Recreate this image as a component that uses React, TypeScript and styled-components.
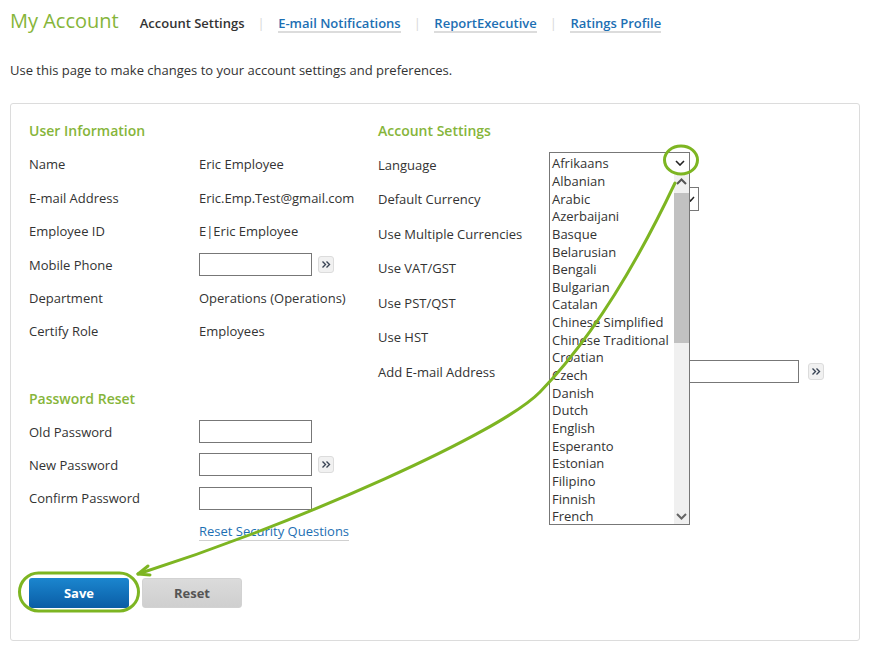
import React from "react";
import styled, { createGlobalStyle } from "styled-components";

const Global = createGlobalStyle`
  html, body { margin: 0; padding: 0; background: #fff; }
  body {
    font-family: "Open Sans", "Liberation Sans", Arial, sans-serif;
    color: #333;
    font-size: 13px;
  }
  * { box-sizing: border-box; }
`;

const Page = styled.div`
  position: relative;
  width: 871px;
  height: 650px;
  padding: 0 10px;
  overflow: hidden;
`;

const Header = styled.div`
  display: flex;
  align-items: baseline;
  padding-top: 9px;
  height: 33px;
`;

const Title = styled.h1`
  margin: 0 21px 0 0;
  font-size: 20px;
  font-weight: 400;
  line-height: 24px;
  color: #86b53a;
`;

const NavItem = styled.a<{ $active?: boolean }>`
  font-size: 13px;
  font-weight: 600;
  line-height: 16px;
  text-decoration: none;
  color: ${(p) => (p.$active ? "#333" : "#1d6fb3")};
  border-bottom: 2px solid ${(p) => (p.$active ? "transparent" : "#dcdcdc")};
`;

const NavSep = styled.span`
  font-size: 13px;
  color: #d8d8d8;
  margin: 0 13.5px 0 13px;
`;

const Intro = styled.p`
  margin: 28px 0 0;
  font-size: 13px;
  line-height: 18px;
`;

const Panel = styled.div`
  margin-top: 24px;
  width: 850px;
  border: 1px solid #dcdcdc;
  border-radius: 3px;
  padding: 10.3px 18px 32px;
`;

const Columns = styled.div`
  display: flex;
`;

const Column = styled.div<{ $width?: number }>`
  display: flex;
  flex-direction: column;
  ${(p) => (p.$width ? `width: ${p.$width}px;` : "flex: 1;")}
`;

const SectionTitle = styled.div`
  height: 33.4px;
  display: flex;
  align-items: center;
  font-size: 14px;
  font-weight: 600;
  color: #86b53a;
`;

const Row = styled.div<{ $h: number }>`
  height: ${(p) => p.$h}px;
  display: flex;
  align-items: center;
`;

const Label = styled.div<{ $w: number }>`
  width: ${(p) => p.$w}px;
  flex-shrink: 0;
  line-height: 18px;
`;

const Value = styled.div`
  line-height: 18px;
`;

const TextInput = styled.input<{ $w: number }>`
  width: ${(p) => p.$w}px;
  height: 23px;
  border: 1px solid #777;
  border-radius: 0;
  padding: 0 3px;
  font: inherit;
`;

const GoButton = styled.button<{ $gap?: number }>`
  width: 16px;
  height: 17px;
  margin-left: ${(p) => p.$gap ?? 6}px;
  padding: 0;
  border: 1px solid #dcdcdc;
  border-radius: 3px;
  background: #f1f1f1;
  display: flex;
  align-items: center;
  justify-content: center;
`;

const Link = styled.a`
  color: #1d6fb3;
  text-decoration: none;
  line-height: 17px;
  border-bottom: 1px solid #d0d0d0;
`;

const SelectWrap = styled.div`
  position: relative;
  width: 141px;
  align-self: flex-start;
  margin-top: 4.3px;
  z-index: 5;
`;

const SelectHead = styled.div`
  height: 21px;
  border: 1px solid #777;
  border-bottom: none;
  background: #fff;
  padding: 1px 0 0 2px;
  display: flex;
  align-items: center;
  justify-content: space-between;
  line-height: 18px;
`;

const Chevron = styled.svg`
  margin-right: 4px;
`;

const ListBox = styled.div`
  position: absolute;
  top: 100%;
  left: 0;
  width: 141px;
  height: 352.5px;
  border: 1px solid #777;
  border-top: none;
  background: #fff;
  overflow: hidden;
`;

const Option = styled.div`
  height: 17.65px;
  line-height: 17.65px;
  padding-left: 2px;
  white-space: nowrap;
`;

const ScrollTrack = styled.div`
  position: absolute;
  top: 0;
  right: 0;
  bottom: 0;
  width: 15px;
  background: #f0f0f0;
`;

const ScrollThumb = styled.div`
  position: absolute;
  top: 20px;
  left: 0;
  width: 15px;
  height: 150px;
  background: #c1c1c1;
`;

const ScrollArrow = styled.svg<{ $bottom?: boolean }>`
  position: absolute;
  left: 2px;
  ${(p) => (p.$bottom ? "bottom: 4px;" : "top: 5px;")}
`;

const Select = styled.div<{ $w: number }>`
  width: ${(p) => p.$w}px;
  height: 24px;
  border: 1px solid #777;
  display: flex;
  align-items: center;
  justify-content: flex-end;
  padding-right: 3px;
`;

const Buttons = styled.div`
  display: flex;
  gap: 13px;
  margin-top: 29.5px;
`;

const Button = styled.button<{ $primary?: boolean }>`
  width: 100px;
  height: 30px;
  border-radius: 3px;
  font-family: inherit;
  font-size: 13px;
  font-weight: 700;
  border: ${(p) => (p.$primary ? "none" : "1px solid #d2d2d2")};
  color: ${(p) => (p.$primary ? "#fff" : "#555")};
  background: ${(p) =>
    p.$primary
      ? "linear-gradient(#1b86cf, #0a5da5)"
      : "linear-gradient(#dbdbdb, #cfcfcf)"};
`;

const Overlay = styled.svg`
  position: absolute;
  left: 0;
  top: 0;
  pointer-events: none;
  z-index: 10;
`;

const Dbl = () => (
  <svg width="10" height="9" viewBox="0 0 10 9">
    <path d="M1.5 1.5 L4.5 4.5 L1.5 7.5 M5.5 1.5 L8.5 4.5 L5.5 7.5" fill="none" stroke="#3a4455" strokeWidth="1.4" />
  </svg>
);

const languages = [
  "Albanian", "Arabic", "Azerbaijani", "Basque", "Belarusian", "Bengali", "Bulgarian", "Catalan",
  "Chinese Simplified", "Chinese Traditional", "Croatian", "Czech", "Danish", "Dutch", "English",
  "Esperanto", "Estonian", "Filipino", "Finnish", "French",
];

const LH = 33.4;
const RH = 34.5;

export default function App() {
  return (
    <Page>
      <Global />
      <Header>
        <Title>My Account</Title>
        <NavItem $active>Account Settings</NavItem>
        <NavSep>|</NavSep>
        <NavItem href="#">E-mail Notifications</NavItem>
        <NavSep>|</NavSep>
        <NavItem href="#">ReportExecutive</NavItem>
        <NavSep>|</NavSep>
        <NavItem href="#">Ratings Profile</NavItem>
      </Header>
      <Intro>Use this page to make changes to your account settings and preferences.</Intro>
      <Panel>
        <Columns>
          <Column $width={349}>
            <SectionTitle>User Information</SectionTitle>
            <Row $h={LH}><Label $w={170}>Name</Label><Value>Eric Employee</Value></Row>
            <Row $h={LH}><Label $w={170}>E-mail Address</Label><Value>Eric.Emp.Test@gmail.com</Value></Row>
            <Row $h={LH}><Label $w={170}>Employee ID</Label><Value>E|Eric Employee</Value></Row>
            <Row $h={LH}>
              <Label $w={170}>Mobile Phone</Label>
              <TextInput $w={113} />
              <GoButton><Dbl /></GoButton>
            </Row>
            <Row $h={LH}><Label $w={170}>Department</Label><Value>Operations (Operations)</Value></Row>
            <Row $h={LH}><Label $w={170}>Certify Role</Label><Value>Employees</Value></Row>
            <Row $h={LH} />
            <SectionTitle>Password Reset</SectionTitle>
            <Row $h={LH}><Label $w={170}>Old Password</Label><TextInput $w={113} type="password" /></Row>
            <Row $h={LH}>
              <Label $w={170}>New Password</Label>
              <TextInput $w={113} type="password" />
              <GoButton><Dbl /></GoButton>
            </Row>
            <Row $h={LH}><Label $w={170}>Confirm Password</Label><TextInput $w={113} type="password" /></Row>
            <Row $h={LH}><Label $w={170} /><Link href="#">Reset Security Questions</Link></Row>
          </Column>
          <Column>
            <SectionTitle>Account Settings</SectionTitle>
            <Row $h={RH}>
              <Label $w={171}>Language</Label>
              <SelectWrap>
                <SelectHead>
                  Afrikaans
                  <Chevron width="10" height="6" viewBox="0 0 10 6">
                    <path d="M1 1 L5 5 L9 1" fill="none" stroke="#222" strokeWidth="1.6" />
                  </Chevron>
                </SelectHead>
                <ListBox>
                  {languages.map((l) => (
                    <Option key={l}>{l}</Option>
                  ))}
                  <ScrollTrack>
                    <ScrollArrow width="11" height="7" viewBox="0 0 11 7">
                      <path d="M1 6 L5.5 1.5 L10 6" fill="none" stroke="#555" strokeWidth="2" />
                    </ScrollArrow>
                    <ScrollThumb />
                    <ScrollArrow $bottom width="11" height="7" viewBox="0 0 11 7">
                      <path d="M1 1 L5.5 5.5 L10 1" fill="none" stroke="#666" strokeWidth="2" />
                    </ScrollArrow>
                  </ScrollTrack>
                </ListBox>
              </SelectWrap>
            </Row>
            <Row $h={RH}>
              <Label $w={171}>Default Currency</Label>
              <Select $w={150}>
                <svg width="9" height="6" viewBox="0 0 9 6">
                  <path d="M1 1 L4.5 5 L8 1" fill="none" stroke="#222" strokeWidth="1.5" />
                </svg>
              </Select>
            </Row>
            <Row $h={RH}><Label $w={171}>Use Multiple Currencies</Label></Row>
            <Row $h={RH}><Label $w={171}>Use VAT/GST</Label></Row>
            <Row $h={RH}><Label $w={171}>Use PST/QST</Label></Row>
            <Row $h={RH}><Label $w={171}>Use HST</Label></Row>
            <Row $h={RH}>
              <Label $w={171}>Add E-mail Address</Label>
              <TextInput $w={250} />
              <GoButton $gap={9}><Dbl /></GoButton>
            </Row>
          </Column>
        </Columns>
        <Buttons>
          <Button $primary>Save</Button>
          <Button>Reset</Button>
        </Buttons>
      </Panel>
      <Overlay width="871" height="650" viewBox="0 0 871 650">
        <g fill="none" stroke="#7db522" strokeWidth="3" strokeLinecap="round">
          <ellipse cx="681" cy="160" rx="16.5" ry="14" />
          <rect x="19.5" y="573" width="119" height="38" rx="19" />
          <path d="M675 183 Q610 320 540 392 C500 433 300 522 138 574" />
          <path d="M138 574 L148 566 M138 574 L150 575" />
        </g>
      </Overlay>
    </Page>
  );
}
